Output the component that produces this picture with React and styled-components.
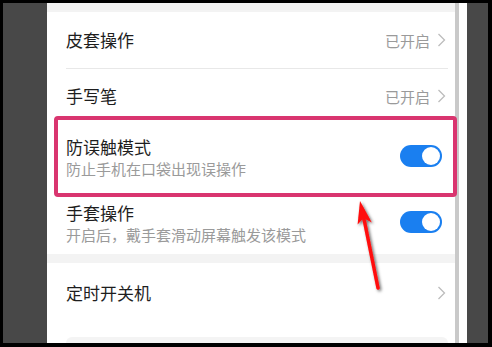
import React from 'react';
import styled, { createGlobalStyle } from 'styled-components';

const GlobalStyle = createGlobalStyle`
  html, body {
    margin: 0;
    padding: 0;
    background: #000;
  }
  body {
    font-family: "Noto Sans CJK SC", "Noto Sans", sans-serif;
  }
`;

const Frame = styled.div`
  width: 492px;
  height: 347px;
  box-sizing: border-box;
  border-style: solid;
  border-color: #000;
  border-width: 3px 4px 4px 3px;
  background: #484848;
  padding-left: 44px;
  display: flex;
  overflow: hidden;
`;

const Phone = styled.div`
  position: relative;
  width: 420px;
  height: 100%;
  background: #fff;
  display: flex;
  overflow: hidden;
`;

const List = styled.div`
  flex: 1;
  display: flex;
  flex-direction: column;
`;

const ScrollBar = styled.div`
  width: 4px;
  background: #c9c9c9;
  margin-right: 8px;
`;

const Band = styled.div`
  height: ${p => p.h}px;
  flex-shrink: 0;
  background: #f3f3f3;
`;

const Row = styled.div`
  height: ${p => p.h}px;
  flex-shrink: 0;
  display: flex;
  align-items: center;
  justify-content: space-between;
  padding: 0 9px 0 19px;
`;

const Divider = styled.div`
  height: 1px;
  background: #e8e8e8;
  margin: 0 7px 0 19px;
`;

const TextBlock = styled.div`
  display: flex;
  flex-direction: column;
`;

const Title = styled.div`
  font-size: 17px;
  line-height: 22px;
  color: #1e1e1e;
`;

const Sub = styled.div`
  font-size: 15px;
  line-height: 22px;
  color: #9a9a9a;
`;

const Status = styled.div`
  display: flex;
  align-items: center;
  gap: 7px;
  font-size: 15px;
  color: #9a9a9a;
`;

const Toggle = styled.div`
  width: 42px;
  height: 22px;
  border-radius: 11px;
  background: #1a7ff0;
  margin: 0 4px 4px 0;
  position: relative;
  &::after {
    content: '';
    position: absolute;
    right: 2px;
    top: 2px;
    width: 18px;
    height: 18px;
    border-radius: 50%;
    background: #fff;
  }
`;

const Spacer = styled.div`
  height: 15px;
  flex-shrink: 0;
`;

const BottomCard = styled.div`
  flex: 1;
  margin: 0 7px 0 19px;
  background: #f4f4f4;
  border-radius: 8px 8px 0 0;
`;

const Highlight = styled.div`
  position: absolute;
  left: 7px;
  top: 113px;
  width: 403px;
  height: 81px;
  box-sizing: border-box;
  border: 4px solid #d9356f;
  border-radius: 4px;
`;

const ArrowSvg = styled.svg`
  position: absolute;
  left: 298px;
  top: 192px;
  overflow: visible;
`;

const Chevron = ({ color = '#bcbcbc' }) => (
  <svg width="9" height="14" viewBox="0 0 9 14">
    <polyline points="1.5,1 7.5,7 1.5,13" fill="none" stroke={color} strokeWidth="1.3" />
  </svg>
);

const Arrow = () => (
  <ArrowSvg width="45" height="100" viewBox="0 0 45 100">
    <defs>
      <filter id="sh" x="-50%" y="-20%" width="200%" height="140%">
        <feDropShadow dx="1.5" dy="1.5" stdDeviation="1.5" floodColor="#000" floodOpacity="0.6" />
      </filter>
    </defs>
    <g filter="url(#sh)" fill="#ff0a0a" stroke="none">
      <line x1="19" y1="24" x2="33" y2="93" stroke="#ff0a0a" strokeWidth="3.5" strokeLinecap="round" />
      <polygon points="15,6 26.8,27.5 18.6,23 12.6,29.5" />
    </g>
  </ArrowSvg>
);

export default function App() {
  return (
    <>
      <GlobalStyle />
      <Frame>
        <Phone>
          <List>
            <Band h={9} />
            <Row h={56}>
              <Title>皮套操作</Title>
              <Status>已开启<Chevron /></Status>
            </Row>
            <Divider />
            <Row h={54}>
              <Title>手写笔</Title>
              <Status>已开启<Chevron /></Status>
            </Row>
            <Row h={70}>
              <TextBlock>
                <Title>防误触模式</Title>
                <Sub>防止手机在口袋出现误操作</Sub>
              </TextBlock>
              <Toggle />
            </Row>
            <Row h={61}>
              <TextBlock>
                <Title>手套操作</Title>
                <Sub>开启后，戴手套滑动屏幕触发该模式</Sub>
              </TextBlock>
              <Toggle />
            </Row>
            <Band h={9} />
            <Row h={59}>
              <Title>定时开关机</Title>
              <Chevron />
            </Row>
            <Spacer />
            <BottomCard />
          </List>
          <ScrollBar />
          <Highlight />
          <Arrow />
        </Phone>
      </Frame>
    </>
  );
}
